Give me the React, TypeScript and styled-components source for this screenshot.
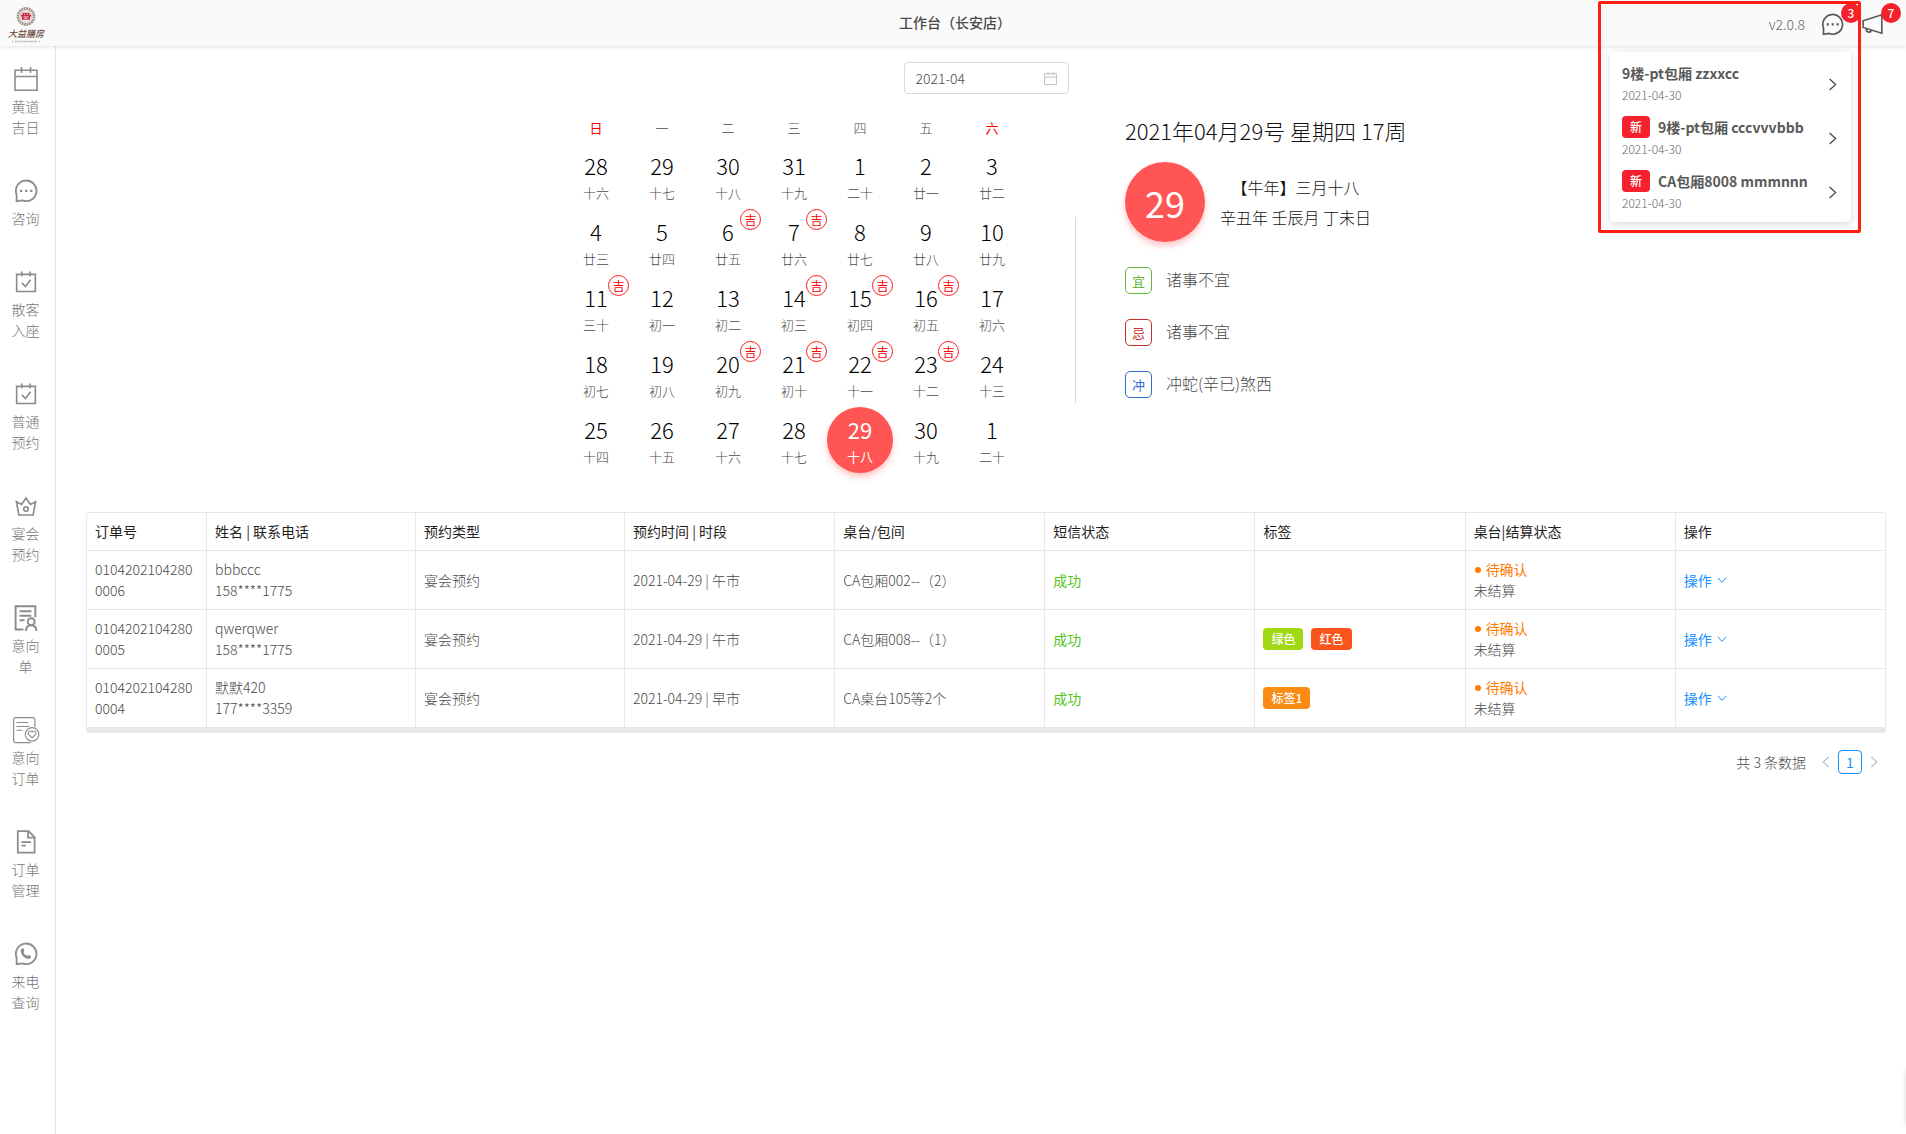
import React from 'react';
import styled, { createGlobalStyle } from 'styled-components';

const GlobalStyle = createGlobalStyle`
  *, *::before, *::after { box-sizing: border-box; }
  body {
    margin: 0;
    background: #fff;
    color: #4a4a4a;
    font-family: "Noto Sans CJK SC", "Liberation Sans", sans-serif;
    font-size: 14px;
    font-weight: 300;
    line-height: 21px;
  }
  button, input { font: inherit; color: inherit; }
  button { padding: 0; border: 0; background: none; cursor: pointer; }
  a { color: inherit; text-decoration: none; }
`;

const Page = styled.div`
  display: flex;
  flex-direction: column;
  min-height: 100vh;
`;

/* ---------- header ---------- */

const Header = styled.header`
  position: relative;
  z-index: 2;
  display: grid;
  grid-template-columns: 1fr auto 1fr;
  height: 46px;
  padding: 0 22px 0 6px;
  background: #fafafa;
  box-shadow: 0 1px 4px rgba(0, 0, 0, 0.12);
`;

const Logo = styled.a`
  display: flex;
  flex-direction: column;
  align-items: center;
  width: 40px;
  padding-top: 6px;
`;

const LogoName = styled.span`
  color: #6b4a41;
  font-size: 9px;
  font-style: italic;
  font-weight: 500;
  line-height: 13px;
  white-space: nowrap;
`;

const Title = styled.h1`
  align-self: center;
  margin: 0 0 2px 20px;
  font-size: 14px;
  font-weight: 500;
  line-height: 21px;
`;

const HeaderTools = styled.div`
  display: flex;
  justify-content: flex-end;
  align-items: center;
  gap: 16px;
  padding-top: 2px;
`;

const Version = styled.span`
  color: #666;
`;

const IconButton = styled.button`
  position: relative;
  display: flex;
  color: #595959;
`;

const CountBadge = styled.span`
  position: absolute;
  top: -10px;
  right: -17px;
  width: 20px;
  height: 20px;
  border-radius: 10px;
  background: #f5222d;
  color: #fff;
  font-size: 12px;
  font-weight: 500;
  line-height: 20px;
  text-align: center;
`;

const ToolGroup = styled.div`
  display: flex;
  gap: 18px;
`;

/* ---------- message popover ---------- */

const Popover = styled.ul`
  position: absolute;
  top: 52px;
  right: 55px;
  width: 241px;
  margin: 0;
  padding: 4px 0;
  list-style: none;
  border-radius: 4px;
  background: #fff;
  box-shadow: 0 2px 8px rgba(0, 0, 0, 0.16);
`;

const Message = styled.a`
  display: flex;
  justify-content: space-between;
  align-items: center;
  padding: 6px 12px 4px;
`;

const MessageTitle = styled.div`
  display: flex;
  gap: 8px;
  color: #595959;
  font-weight: 700;
  line-height: 22px;
`;

const MessageDate = styled.time`
  display: block;
  color: #666;
  font-size: 12px;
  line-height: 22px;
`;

const Tag = styled.span<{ $color: string }>`
  display: inline-block;
  padding: 0 8px;
  border-radius: 4px;
  background: ${(p) => p.$color};
  color: #fff;
  font-size: 12px;
  font-weight: 500;
  line-height: 22px;
`;

const Highlight = styled.div`
  position: absolute;
  top: 1px;
  right: 45px;
  width: 263px;
  height: 232px;
  border: 3px solid #ff1f12;
  border-radius: 2px;
  pointer-events: none;
`;

/* ---------- body ---------- */

const Body = styled.div`
  display: flex;
  flex: 1;
`;

const Sidebar = styled.nav`
  display: flex;
  flex-direction: column;
  gap: 37px;
  flex: 0 0 56px;
  padding: 17px 4px 0 0;
  border-right: 1px solid #e4e4e4;
`;

const NavItem = styled.a`
  display: flex;
  flex-direction: column;
  align-items: center;
  gap: 1px;
  color: #8c8c8c;
`;

const NavIcon = styled.span`
  display: flex;
  align-items: center;
  height: 32px;
`;

const NavLabel = styled.span`
  width: 32px;
  color: #757575;
  text-align: center;
`;

const Main = styled.main`
  flex: 1;
  min-width: 0;
  padding: 16px 20px 24px 30px;
`;

const DateField = styled.label`
  display: flex;
  align-items: center;
  width: 165px;
  height: 32px;
  margin: 0 auto;
  padding: 0 11px;
  border: 1px solid #d9d9d9;
  border-radius: 4px;
  color: #bfbfbf;
`;

const DateInput = styled.input`
  flex: 1;
  min-width: 0;
  padding: 0;
  border: 0;
  outline: 0;
  color: #4a4a4a;
`;

const Almanac = styled.section`
  display: flex;
  justify-content: center;
  align-items: center;
  padding-top: 14px;
`;

const Calendar = styled.table`
  width: 462px;
  margin: 7px 0 39px;
  border-spacing: 0;
  table-layout: fixed;
`;

const Weekday = styled.th<{ $weekend: boolean }>`
  height: 28px;
  padding: 0 0 3px;
  color: ${(p) => (p.$weekend ? '#ff0000' : 'inherit')};
  font-size: 13px;
  font-weight: ${(p) => (p.$weekend ? 400 : 300)};
`;

const DayCell = styled.td`
  padding: 0;
`;

const DayButton = styled.button<{ $active: boolean }>`
  position: relative;
  display: flex;
  flex-direction: column;
  align-items: center;
  gap: 2px;
  width: 100%;
  height: 66px;
  padding-top: 7px;
  border-radius: 50%;
  background: ${(p) => (p.$active ? '#ff5555' : 'transparent')};
  box-shadow: ${(p) => (p.$active ? '0 4px 6px rgba(255, 85, 85, 0.35)' : 'none')};
  color: ${(p) => (p.$active ? '#fff' : 'inherit')};
  font-weight: ${(p) => (p.$active ? 400 : 300)};
`;

const DayNumber = styled.span<{ $active: boolean }>`
  color: ${(p) => (p.$active ? '#fff' : '#000')};
  font-size: 22px;
  line-height: 30px;
`;

const Lunar = styled.span`
  font-size: 13px;
`;

const Lucky = styled.span`
  position: absolute;
  top: 0;
  right: 0;
  width: 21px;
  height: 21px;
  border: 1px solid #ff1a1a;
  border-radius: 50%;
  color: #ff0000;
  font-size: 12px;
  font-weight: 400;
  line-height: 19px;
  text-align: center;
`;

const Divider = styled.div`
  width: 1px;
  height: 186px;
  margin: 0 49px 0 50px;
  background: #d9d9d9;
`;

const DayPanel = styled.div`
  align-self: flex-start;
  width: 284px;
  padding-top: 6px;
  white-space: nowrap;
`;

const DayTitle = styled.h2`
  margin: 0 0 15px;
  color: #111;
  font-size: 22px;
  font-weight: 300;
  line-height: 33px;
`;

const DaySummary = styled.div`
  display: flex;
  align-items: center;
  gap: 15px;
  margin-bottom: 25px;
`;

const DayDisc = styled.div`
  width: 80px;
  height: 80px;
  border-radius: 50%;
  background: #ff5555;
  box-shadow: 0 4px 6px rgba(255, 85, 85, 0.35);
  color: #fff;
  font-size: 36px;
  font-weight: 400;
  line-height: 80px;
  text-align: center;
`;

const LunarText = styled.p`
  margin: 0;
  color: #111;
  font-size: 16px;
  line-height: 30px;
  text-align: center;
`;

const AdviceList = styled.dl`
  display: flex;
  flex-direction: column;
  gap: 25px;
  margin: 0;
`;

const Advice = styled.div`
  display: flex;
  gap: 14px;
`;

const AdviceMark = styled.dt<{ $color: string }>`
  width: 27px;
  height: 27px;
  border: 1px solid ${(p) => p.$color};
  border-radius: 5px;
  color: ${(p) => p.$color};
  font-size: 13px;
  font-weight: 400;
  line-height: 26px;
  text-align: center;
`;

const AdviceText = styled.dd`
  margin: 0;
  font-size: 16px;
  line-height: 25px;
`;

/* ---------- orders ---------- */

const OrderTable = styled.table`
  width: 100%;
  border: solid #e8e8e8;
  border-width: 1px 0 5px 1px;
  border-radius: 4px;
  border-spacing: 0;
  table-layout: fixed;
`;

const HeadCell = styled.th<{ $width?: number }>`
  width: ${(p) => (p.$width ? `${p.$width}px` : 'auto')};
  padding: 8px;
  border: solid #e8e8e8;
  border-width: 0 1px 1px 0;
  color: #1f1f1f;
  font-weight: 400;
  text-align: left;
`;

const Cell = styled.td`
  height: 59px;
  padding: 8px;
  border: solid #e8e8e8;
  border-width: 0 1px 1px 0;
  word-break: break-all;
`;

const Success = styled.span`
  color: #52c41a;
  font-weight: 400;
`;

const TagList = styled.div`
  display: flex;
  gap: 8px;
`;

const Pending = styled.div`
  display: flex;
  align-items: center;
  gap: 5px;
  color: #ff7a00;
  font-weight: 400;

  &::before {
    content: '';
    width: 6px;
    height: 6px;
    margin-left: 1px;
    border-radius: 50%;
    background: currentColor;
  }
`;

const ActionButton = styled.button`
  display: flex;
  align-items: center;
  gap: 5px;
  color: #1890ff;
  font-weight: 400;
`;

const Pagination = styled.nav`
  display: flex;
  justify-content: flex-end;
  align-items: center;
  margin-top: 17px;
`;

const Total = styled.span`
  margin-right: 8px;
`;

const PageButton = styled.button<{ $current?: boolean }>`
  display: flex;
  justify-content: center;
  align-items: center;
  width: 24px;
  height: 24px;
  border: 1px solid ${(p) => (p.$current ? '#1890ff' : 'transparent')};
  border-radius: 4px;
  color: ${(p) => (p.$current ? '#1890ff' : '#bfbfbf')};
  font-weight: 400;
`;

/* collapsed drawer: only its shadow reaches the window */
const Drawer = styled.aside`
  position: fixed;
  right: -40px;
  bottom: 8px;
  width: 40px;
  height: 56px;
  border-radius: 4px;
  box-shadow: 0 0 6px rgba(0, 0, 0, 0.14);
`;

/* ---------- drawings ---------- */

type IconProps = { size?: number; stroke?: number };

const Svg = ({ size = 24, stroke = 1.6, children }: IconProps & { children: React.ReactNode }) => (
  <svg width={size} height={size} viewBox="0 0 24 24" fill="none" stroke="currentColor" strokeWidth={stroke} aria-hidden="true">
    {children}
  </svg>
);

const CalendarIcon = ({ size, stroke }: IconProps) => (
  <Svg size={size} stroke={stroke}>
    <path d="M1 3.2h22v20H1zM1 9.5h22M7.5 0v6M16.5 0v6" />
  </Svg>
);

const ChatIcon = ({ size }: IconProps) => (
  <Svg size={size} stroke={1.8}>
    <path d="M2.6 22.2V15.6A10.3 10.3 0 1 1 8.4 21.4z" />
    <path d="M6 10.8h2.200v2.200H6zM11.100 10.800h2.200v2.200h-2.200zM16.200 10.800h2.200v2.200h-2.200z" fill="currentColor" stroke="none" />
  </Svg>
);

const CheckCalendarIcon = () => (
  <Svg size={22} stroke={1.8}>
    <path d="M1.8 3.6h20.4v18.800H1.800zM7.400.6v5.200M16.400.6v5.200M7.400 12.800l4 4 5.600-7.200" />
  </Svg>
);

const CrownIcon = () => (
  <Svg size={22} stroke={1.8}>
    <path d="M1.600 7.400l5.600 3L12 3.200l4.800 7.200 5.600-3-2.600 14.400H4.200z" />
    <circle cx="12" cy="15.400" r="2.400" />
  </Svg>
);

const IntentIcon = () => (
  <Svg size={26} stroke={1.8}>
    <path d="M9.600 22.600H2.400V1.200h18.200v10.200M6 5.800h11M6 10h11M6 14h4.600" />
    <circle cx="16.800" cy="15.400" r="3.200" />
    <path d="M12 24c0-3.400 2-5.400 4.800-5.400s4.800 2 4.800 5.400" />
  </Svg>
);

const IntentOrderIcon = () => (
  <Svg size={28} stroke={1}>
    <path d="M16 22.800H3A1.600 1.600 0 0 1 1.400 21.200V3A1.600 1.600 0 0 1 3 1.400H18A1.600 1.600 0 0 1 19.600 3V9.600M3.800 5.600h10.200M3.800 9h11M3.800 12.200h5.200" />
    <circle cx="17.200" cy="15.800" r="5.800" />
    <path d="M17.200 18.800l-3-3a1.700 1.700 0 0 1 3-2.200 1.700 1.700 0 0 1 3 2.200z" />
  </Svg>
);

const DocumentIcon = () => (
  <Svg size={24} stroke={1.8}>
    <path d="M3.800 1.200h10.800l6 6v15.400H3.800zM14 1.200v6.400h6.600M7.400 12.200h9.600M7.400 15.600h4.400" />
  </Svg>
);

const PhoneIcon = () => (
  <Svg size={24} stroke={1.8}>
    <path d="M2.600 22.200V15.600A10.300 10.300 0 1 1 8.400 21.400z" />
    <path d="M7 7.400c1.400-2 2.800-.8 3.200.8.300 1.400-.8 1.700-.4 2.600.5 1.300 1.500 2.300 2.800 2.800.9.400 1.300-.8 2.700-.3 1.800.6 2.600 2 .6 3.200-4 2-10.400-4.600-8.900-9.100z" fill="currentColor" stroke="none" />
  </Svg>
);

const HornIcon = () => (
  <Svg size={22} stroke={1.8}>
    <path d="M1.200 8.400L21.600 2v20L1.200 15.800zM4.800 17.200a2.800 2.800 0 0 0 5.400 1.600" />
  </Svg>
);

const Chevron = ({ turn, size = 10 }: { turn: number; size?: number }) => (
  <svg width={size} height={size} viewBox="0 0 10 10" fill="none" stroke="currentColor" strokeWidth="1" aria-hidden="true">
    <path d="M.8 2.800L5 7.400 9.200 2.800" transform={`rotate(${turn} 5 5)`} />
  </svg>
);

const Emblem = () => (
  <svg width="20" height="21" viewBox="0 0 20 21" fill="none" aria-hidden="true">
    <circle cx="10" cy="10.500" r="8" stroke="#a8978c" strokeWidth="2.800" strokeDasharray="2 .5" />
    <circle cx="10" cy="10.500" r="5.800" stroke="#c7bab2" strokeWidth=".8" />
    <path d="M6.500 6.800h7v2h1.500v2h-1v3H6v-3H5v-2h1.500z" fill="#c5283d" />
    <path d="M8 8.400h1.300M10.800 8.400h1.300M7.300 10.800h5.400M8.200 12.300h3.600" stroke="#fff" strokeWidth=".7" />
  </svg>
);

const LogoRule = () => (
  <svg width="28" height="3" viewBox="0 0 28 3" aria-hidden="true">
    <path d="M0 1.500h1M3 1.500h22M27 1.500h1" stroke="#b9aca6" strokeWidth="1.400" strokeDasharray="1.200 .6" />
  </svg>
);

/* ---------- data ---------- */

const navItems = [
  { label: '黄道吉日', icon: <CalendarIcon size={24} /> },
  { label: '咨询', icon: <ChatIcon size={24} /> },
  { label: '散客入座', icon: <CheckCalendarIcon /> },
  { label: '普通预约', icon: <CheckCalendarIcon /> },
  { label: '宴会预约', icon: <CrownIcon /> },
  { label: '意向单', icon: <IntentIcon /> },
  { label: '意向订单', icon: <IntentOrderIcon /> },
  { label: '订单管理', icon: <DocumentIcon /> },
  { label: '来电查询', icon: <PhoneIcon /> },
];

const messages = [
  { title: '9楼-pt包厢 zzxxcc', date: '2021-04-30', fresh: false },
  { title: '9楼-pt包厢 cccvvvbbb', date: '2021-04-30', fresh: true },
  { title: 'CA包厢8008 mmmnnn', date: '2021-04-30', fresh: true },
];

const weekdays = ['日', '一', '二', '三', '四', '五', '六'];

const weeks: [number, string, boolean?][][] = [
  [[28, '十六'], [29, '十七'], [30, '十八'], [31, '十九'], [1, '二十'], [2, '廿一'], [3, '廿二']],
  [[4, '廿三'], [5, '廿四'], [6, '廿五', true], [7, '廿六', true], [8, '廿七'], [9, '廿八'], [10, '廿九']],
  [[11, '三十', true], [12, '初一'], [13, '初二'], [14, '初三', true], [15, '初四', true], [16, '初五', true], [17, '初六']],
  [[18, '初七'], [19, '初八'], [20, '初九', true], [21, '初十', true], [22, '十一', true], [23, '十二', true], [24, '十三']],
  [[25, '十四'], [26, '十五'], [27, '十六'], [28, '十七'], [29, '十八'], [30, '十九'], [1, '二十']],
];

const advice = [
  { mark: '宜', text: '诸事不宜', color: '#67b83a' },
  { mark: '忌', text: '诸事不宜', color: '#c6302b' },
  { mark: '冲', text: '冲蛇(辛已)煞西', color: '#2f6bd6' },
];

const columns: { label: string; width?: number }[] = [
  { label: '订单号', width: 120 },
  { label: '姓名 | 联系电话', width: 209 },
  { label: '预约类型', width: 209 },
  { label: '预约时间 | 时段' },
  { label: '桌台/包间' },
  { label: '短信状态' },
  { label: '标签' },
  { label: '桌台|结算状态' },
  { label: '操作' },
];

const orders = [
  { id: '01042021042800006', name: 'bbbccc', phone: '158****1775', time: '2021-04-29 | 午市', table: 'CA包厢002--（2）', tags: [] },
  {
    id: '01042021042800005', name: 'qwerqwer', phone: '158****1775', time: '2021-04-29 | 午市', table: 'CA包厢008--（1）',
    tags: [{ text: '绿色', color: '#a0d911' }, { text: '红色', color: '#fa541c' }],
  },
  {
    id: '01042021042800004', name: '默默420', phone: '177****3359', time: '2021-04-29 | 早市', table: 'CA桌台105等2个',
    tags: [{ text: '标签1', color: '#fa8c16' }],
  },
];

export default function App() {
  return (
    <Page>
      <GlobalStyle />
      <Header>
        <Logo href="#">
          <Emblem />
          <LogoName>大益膳房</LogoName>
          <LogoRule />
        </Logo>
        <Title>工作台（长安店）</Title>
        <HeaderTools>
          <Version>v2.0.8</Version>
          <ToolGroup>
            <IconButton aria-label="消息">
              <ChatIcon size={23} />
              <CountBadge>3</CountBadge>
            </IconButton>
            <IconButton aria-label="公告">
              <HornIcon />
              <CountBadge>7</CountBadge>
            </IconButton>
          </ToolGroup>
        </HeaderTools>
        <Popover>
          {messages.map((m) => (
            <li key={m.title}>
              <Message href="#">
                <div>
                  <MessageTitle>
                    {m.fresh && <Tag $color="#f5222d">新</Tag>}
                    <span>{m.title}</span>
                  </MessageTitle>
                  <MessageDate>{m.date}</MessageDate>
                </div>
                <Chevron turn={-90} size={13} />
              </Message>
            </li>
          ))}
        </Popover>
        <Highlight />
      </Header>
      <Body>
        <Sidebar>
          {navItems.map((item) => (
            <NavItem key={item.label} href="#">
              <NavIcon>{item.icon}</NavIcon>
              <NavLabel>{item.label}</NavLabel>
            </NavItem>
          ))}
        </Sidebar>
        <Main>
          <DateField>
            <DateInput defaultValue="2021-04" aria-label="月份" />
            <CalendarIcon size={13} stroke={1.8} />
          </DateField>
          <Almanac>
            <Calendar>
              <thead>
                <tr>
                  {weekdays.map((d, i) => (
                    <Weekday key={d} $weekend={i === 0 || i === 6}>{d}</Weekday>
                  ))}
                </tr>
              </thead>
              <tbody>
                {weeks.map((week, w) => (
                  <tr key={w}>
                    {week.map(([day, lunar, lucky]) => {
                      const active = w === 4 && day === 29;
                      return (
                        <DayCell key={day}>
                          <DayButton $active={active}>
                            <DayNumber $active={active}>{day}</DayNumber>
                            <Lunar>{lunar}</Lunar>
                            {lucky && <Lucky>吉</Lucky>}
                          </DayButton>
                        </DayCell>
                      );
                    })}
                  </tr>
                ))}
              </tbody>
            </Calendar>
            <Divider />
            <DayPanel>
              <DayTitle>2021年04月29号 星期四 17周</DayTitle>
              <DaySummary>
                <DayDisc>29</DayDisc>
                <div>
                  <LunarText>【牛年】三月十八</LunarText>
                  <LunarText>辛丑年 壬辰月 丁未日</LunarText>
                </div>
              </DaySummary>
              <AdviceList>
                {advice.map((a) => (
                  <Advice key={a.mark}>
                    <AdviceMark $color={a.color}>{a.mark}</AdviceMark>
                    <AdviceText>{a.text}</AdviceText>
                  </Advice>
                ))}
              </AdviceList>
            </DayPanel>
          </Almanac>
          <OrderTable>
            <thead>
              <tr>
                {columns.map((c) => (
                  <HeadCell key={c.label} $width={c.width}>{c.label}</HeadCell>
                ))}
              </tr>
            </thead>
            <tbody>
              {orders.map((o) => (
                <tr key={o.id}>
                  <Cell>{o.id}</Cell>
                  <Cell>{o.name}<br />{o.phone}</Cell>
                  <Cell>宴会预约</Cell>
                  <Cell>{o.time}</Cell>
                  <Cell>{o.table}</Cell>
                  <Cell><Success>成功</Success></Cell>
                  <Cell>
                    <TagList>
                      {o.tags.map((t) => <Tag key={t.text} $color={t.color}>{t.text}</Tag>)}
                    </TagList>
                  </Cell>
                  <Cell>
                    <Pending>待确认</Pending>
                    未结算
                  </Cell>
                  <Cell>
                    <ActionButton>操作<Chevron turn={0} /></ActionButton>
                  </Cell>
                </tr>
              ))}
            </tbody>
          </OrderTable>
          <Pagination aria-label="分页">
            <Total>共 3 条数据</Total>
            <PageButton aria-label="上一页"><Chevron turn={90} size={12} /></PageButton>
            <PageButton $current>1</PageButton>
            <PageButton aria-label="下一页"><Chevron turn={-90} size={12} /></PageButton>
          </Pagination>
        </Main>
      </Body>
      <Drawer />
    </Page>
  );
}
